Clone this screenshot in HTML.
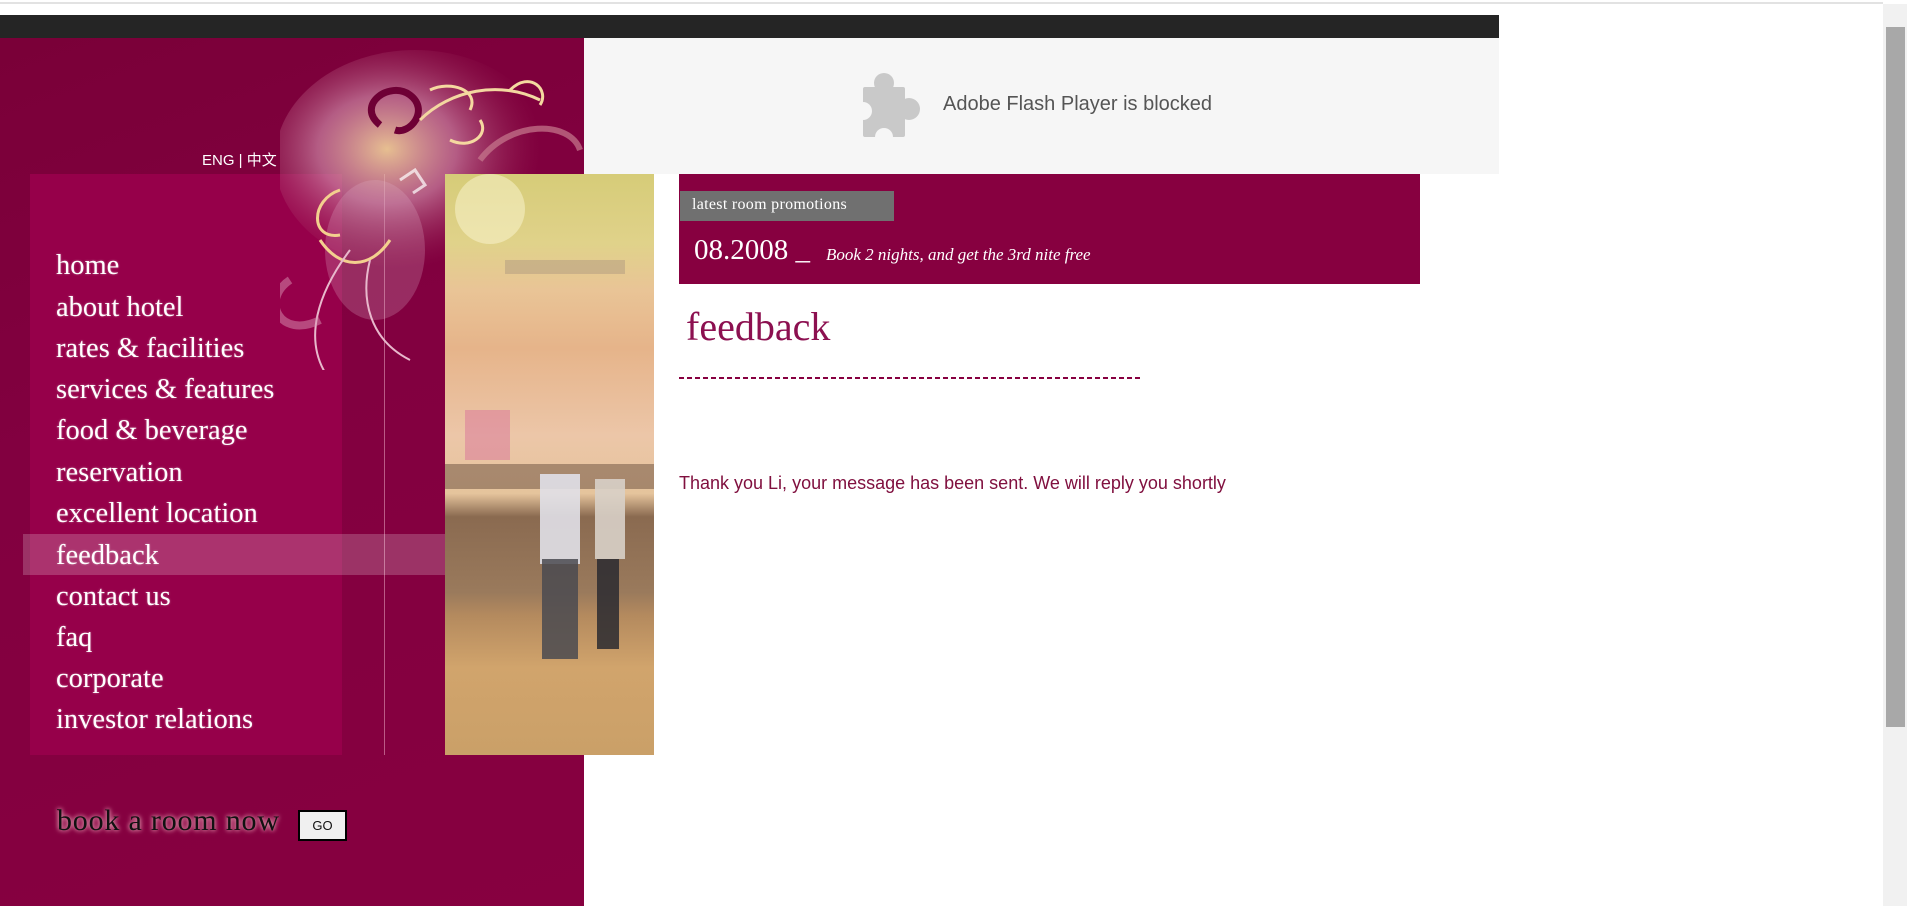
<!DOCTYPE html>
<html><head><meta charset="utf-8"><style>
*{margin:0;padding:0;box-sizing:border-box}
html,body{width:1907px;height:906px;overflow:hidden;background:#fff;position:relative;font-family:"Liberation Sans",sans-serif}
.a{position:absolute}
.menu{position:absolute;left:56px;font-family:"Liberation Serif",serif;font-size:28.5px;color:#fff;line-height:30px;white-space:nowrap;text-shadow:0 0 2px rgba(255,255,255,.4)}
</style></head><body>
<div class="a" style="left:0;top:2px;width:1883px;height:2px;background:#e2e2e2"></div>
<div class="a" style="left:0;top:15px;width:1499px;height:23px;background:#252525"></div>
<!-- left panel -->
<div class="a" style="left:0;top:38px;width:584px;height:868px;background:linear-gradient(160deg,#7a0038 0%,#820040 40%,#870040 100%)"></div>
<div class="a" style="left:30px;top:174px;width:312px;height:581px;background:#96004a"></div>
<div class="a" style="left:384px;top:174px;width:1px;height:581px;background:rgba(255,200,220,.45)"></div>
<!-- flourish -->
<svg class="a" style="left:280px;top:50px" width="310" height="320" viewBox="0 0 310 320">
<defs><radialGradient id="g1" cx="0.4" cy="0.45" r="0.55"><stop offset="0" stop-color="#f2d49a" stop-opacity=".9"/><stop offset="0.45" stop-color="#d89ab4" stop-opacity=".6"/><stop offset="1" stop-color="#a0305a" stop-opacity="0"/></radialGradient></defs>
<ellipse cx="135" cy="110" rx="140" ry="110" fill="url(#g1)"/>
<ellipse cx="95" cy="200" rx="50" ry="70" fill="#e0b0c8" opacity=".25"/>
<path d="M100 75c-25-20 10-45 30-30 20 15 0 40-15 35" fill="none" stroke="#6e0035" stroke-width="7"/>
<path d="M140 70c30-30 80-40 120-20" fill="none" stroke="#f3d7a0" stroke-width="3"/>
<path d="M200 110c30-40 90-40 100-10" fill="none" stroke="#c87a8e" stroke-width="6" opacity=".7"/>
<path d="M150 40c20-10 50 0 40 20M230 40c20-20 40 0 30 15M170 90c20 10 40-5 30-20" fill="none" stroke="#f5d9a0" stroke-width="3"/>
<path d="M60 140c-30 10-30 50 0 45M40 190c20 30 50 30 70 0" fill="none" stroke="#f3d08e" stroke-width="3"/>
<path d="M70 200c-30 40-50 90-20 130M90 210c-10 40 0 80 40 100" fill="none" stroke="#e8b8cc" stroke-width="2"/>
<path d="M10 230c-30 20-10 60 30 40" fill="none" stroke="#d891b2" stroke-width="8" opacity=".5"/>
<path d="M120 130l15-10 10 15-12 8M180 140l20 5" fill="none" stroke="#fff" stroke-width="3" opacity=".7"/>
</svg>
<div class="a" style="left:202px;top:149px;font-size:15px;color:#fff;font-family:'Liberation Sans','Noto Sans CJK SC',sans-serif">ENG | 中文</div>
<div class="a" style="left:23px;top:534px;width:422px;height:41px;background:rgba(255,255,255,.2)"></div>
<div class="menu" style="top:251px">home</div>
<div class="menu" style="top:293px">about hotel</div>
<div class="menu" style="top:334px">rates &amp; facilities</div>
<div class="menu" style="top:375px">services &amp; features</div>
<div class="menu" style="top:416px">food &amp; beverage</div>
<div class="menu" style="top:458px">reservation</div>
<div class="menu" style="top:499px">excellent location</div>
<div class="menu" style="top:541px">feedback</div>
<div class="menu" style="top:582px">contact us</div>
<div class="menu" style="top:623px">faq</div>
<div class="menu" style="top:664px">corporate</div>
<div class="menu" style="top:705px">investor relations</div>
<!-- photo -->
<div class="a" style="left:445px;top:174px;width:209px;height:581px;overflow:hidden;background:linear-gradient(180deg,#d6cc78 0%,#e0d28a 12%,#e9c496 20%,#e6b48a 30%,#ecc6a8 45%,#e5c49c 55%,#8a6a50 59%,#9a7a5c 72%,#b48a5e 76%,#d1a46c 85%,#caa068 100%)">
 <div class="a" style="left:60px;top:86px;width:120px;height:14px;background:#b09a80;opacity:.5"></div>
 <div class="a" style="left:20px;top:236px;width:45px;height:50px;background:#d86a9a;opacity:.45"></div>
 <div class="a" style="left:0;top:290px;width:209px;height:25px;background:#5a4030;opacity:.45"></div>
 <div class="a" style="left:95px;top:300px;width:40px;height:90px;background:#e0e0e8;opacity:.9"></div>
 <div class="a" style="left:97px;top:385px;width:36px;height:100px;background:#4a4a50;opacity:.85"></div>
 <div class="a" style="left:150px;top:305px;width:30px;height:80px;background:#d8d0c8;opacity:.9"></div>
 <div class="a" style="left:152px;top:385px;width:22px;height:90px;background:#2a2a30;opacity:.85"></div>
 <div class="a" style="left:10px;top:0;width:70px;height:70px;border-radius:50%;background:rgba(255,250,220,.45)"></div>
</div>
<div class="a" style="left:57px;top:804px;font-family:'Liberation Serif',serif;font-size:30px;color:#111;letter-spacing:.8px;text-shadow:0 0 4px #e8a0b8,0 0 6px #d8889f">book a room now</div>
<div class="a" style="left:298px;top:810px;width:49px;height:31px;border:2px solid #000;background:#f0f0f0;font-size:13px;text-align:center;line-height:27px;color:#111">GO</div>
<!-- flash -->
<div class="a" style="left:584px;top:38px;width:915px;height:136px;background:#f6f6f6"></div>
<svg class="a" style="left:855px;top:73px" width="66" height="64" viewBox="0 0 66 64">
<g fill="#c9c9c9"><rect x="8" y="14" width="42" height="50" rx="2"/><circle cx="29" cy="10" r="10"/><circle cx="54" cy="36" r="11"/></g>
<circle cx="8" cy="38" r="9" fill="#f6f6f6"/><circle cx="29" cy="64" r="9" fill="#f6f6f6"/></svg>
<div class="a" style="left:943px;top:93px;font-size:20px;color:#555">Adobe Flash Player is blocked</div>
<!-- promo -->
<div class="a" style="left:679px;top:174px;width:741px;height:110px;background:#870040"></div>
<div class="a" style="left:680px;top:191px;width:214px;height:30px;background:#707070"></div>
<div class="a" style="left:692px;top:196px;font-family:'Liberation Serif',serif;font-size:16px;color:#fff;letter-spacing:.3px">latest room promotions</div>
<div class="a" style="left:694px;top:234px;font-family:'Liberation Serif',serif;font-size:29px;color:#fff">08.2008 _</div>
<div class="a" style="left:826px;top:245px;font-family:'Liberation Serif',serif;font-size:17px;font-style:italic;color:#fff">Book 2 nights, and get the 3rd nite free</div>
<div class="a" style="left:686px;top:303px;font-family:'Liberation Serif',serif;font-size:40px;color:#8c1050">feedback</div>
<div class="a" style="left:679px;top:377px;width:462px;height:2px;background:repeating-linear-gradient(90deg,#870040 0 5px,transparent 5px 8px)"></div>
<div class="a" style="left:679px;top:473px;font-size:18px;color:#80103f">Thank you Li, your message has been sent. We will reply you shortly</div>
<!-- scrollbar -->
<div class="a" style="left:1883px;top:4px;width:24px;height:902px;background:#f1f1f1"></div>
<div class="a" style="left:1886px;top:27px;width:19px;height:700px;background:#a8a8a8"></div>
</body></html>
